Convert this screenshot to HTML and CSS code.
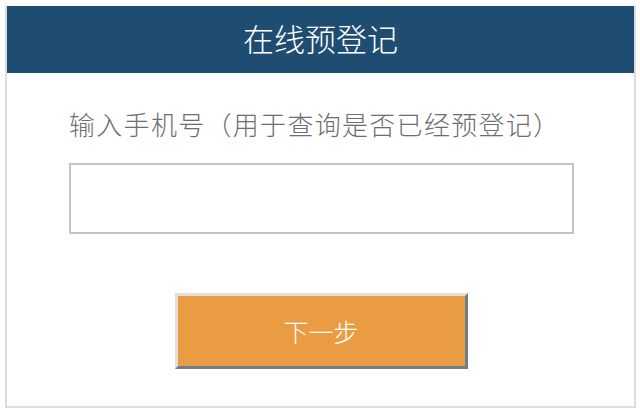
FILE: index.html
```html
<!DOCTYPE html>
<html lang="zh-CN">
<head>
    <meta charset="UTF-8">
    <title>在线预登记</title>
    <link rel="stylesheet" href="styles.css">
</head>
<body>
    <div class="card">
        <div class="header">在线预登记</div>
        <div class="body">
            <label class="label" for="phone">输入手机号（用于查询是否已经预登记）</label>
            <input class="phone" id="phone" type="tel">
            <div class="actions">
                <button class="next">下一步</button>
            </div>
        </div>
    </div>
</body>
</html>
```

FILE: styles.css
```css
body { margin: 6px 4px 0 5px; font-family: "Noto Sans CJK SC", "Noto Sans", sans-serif; background: #fff; }
.card { border: 2px solid #dcdcdc; border-top: none; height: 402px; box-sizing: border-box; box-shadow: 0 2px 2px #eee; }
.header { background: #1f4d72; color: #fff; font-size: 31px; font-weight: 300; text-align: center; height: 67px; line-height: 64px; }
.body { padding: 31px 61px 0 62px; }
.label { display: block; color: #6e6e6e; font-size: 26px; font-weight: 300; line-height: 40px; letter-spacing: 1.3px; white-space: nowrap; }
.phone { display: block; box-sizing: border-box; width: 505px; height: 71px; margin-top: 19px; border: 2px solid #c4c4c4; outline: none; font-size: 20px; }
.actions { display: flex; justify-content: center; margin-top: 59px; }
.next { width: 293px; height: 76px; background: #e99c42; color: #fff; font-family: inherit; font-size: 25px; font-weight: 300; border: 3px solid; border-color: #e0e0e0 #6a7f88 #6a7f88 #e0e0e0; }
```
